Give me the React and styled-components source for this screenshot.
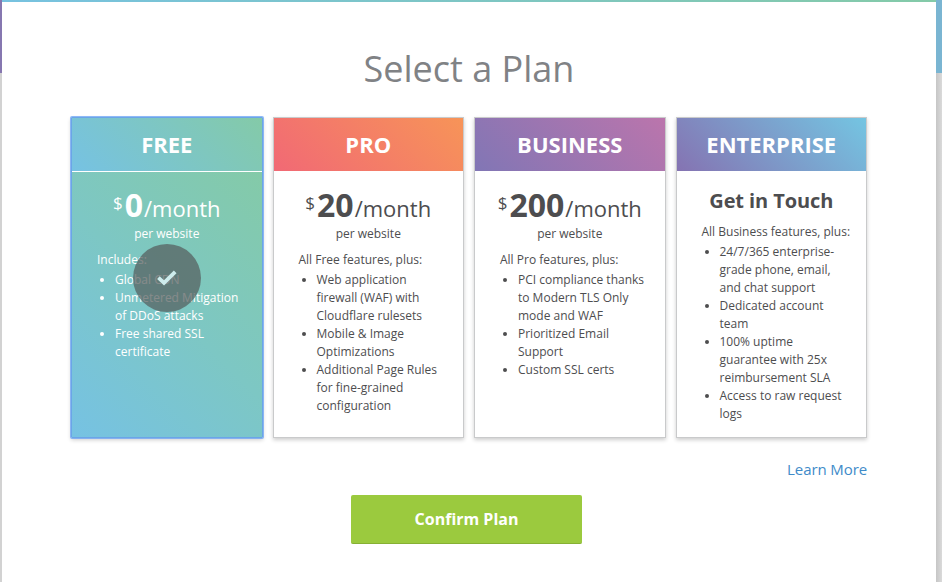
import React from "react";
import styled, { createGlobalStyle, css } from "styled-components";

const GlobalStyle = createGlobalStyle`
  * { box-sizing: border-box; }
  body {
    margin: 0;
    background: #d2d2d2;
    font-family: "Open Sans", sans-serif;
    color: #4d4d4f;
    overflow: hidden;
  }
`;

const Page = styled.div`
  height: 582px;
  padding: 0 6px 0 2px;
  background:
    linear-gradient(90deg, #8677b0 0, #8677b0 2px, #7ab5d2 936px) 0 0 / 100% 73px no-repeat,
    linear-gradient(90deg, #d2d2d2 936px, #c6c6c6 936px, #dadada 942px);
`;

const Modal = styled.main`
  height: 582px;
  padding: 45px 69px 0;
  display: flex;
  flex-direction: column;
  background:
    linear-gradient(90deg, #77c2e0, #84caa8) 0 0 / 100% 2px no-repeat,
    #fff;
`;

const Title = styled.h1`
  margin: 0;
  height: 48px;
  line-height: 48px;
  text-align: center;
  font-size: 36px;
  font-weight: 400;
  color: #808285;
`;

const Plans = styled.section`
  margin-top: 24px;
  display: grid;
  grid-template-columns: repeat(4, 191.5px);
  grid-template-rows: 321px;
  gap: 10px;
  height: 321px;
`;

const Card = styled.article`
  position: relative;
  display: flex;
  flex-direction: column;
  border: 1px solid #c9cacb;
  background: #fff;
  box-shadow: 0 2px 4px rgba(0, 0, 0, 0.2);
  ${(p) =>
    p.$selected &&
    css`
      color: #fff;
      border-color: #6ba5e7;
      border-radius: 1px;
      box-shadow: 0 0 0 1px rgba(106, 163, 245, 0.75), 0 2px 4px rgba(0, 0, 0, 0.2);
    `}
`;

const CardHeader = styled.h2`
  margin: 0;
  flex: 0 0 53px;
  line-height: 52px;
  text-align: center;
  font-size: 22px;
  font-weight: 700;
  color: #fff;
  background: linear-gradient(45deg, ${(p) => p.$from}, ${(p) => p.$to});
`;

const CardBody = styled.div`
  flex: 1;
  padding: 0 20px 0 25px;
  font-size: 12px;
  line-height: 18px;
  ${(p) =>
    p.$filled &&
    css`
      background: linear-gradient(45deg, #76c2e3, #7dc7c4 50%, #84caa8);
      box-shadow: inset 0 1px #fff;
    `}
`;

const Price = styled.div`
  height: 54px;
  margin: 0 -20px 0 -25px;
  display: flex;
  justify-content: center;
  align-items: baseline;
  line-height: 67px;
  font-size: 22px;
  white-space: nowrap;
`;

const Currency = styled.span`
  font-size: 17px;
  position: relative;
  top: -8px;
  margin-right: 2px;
`;

const Amount = styled.strong`
  font-size: 32px;
  font-weight: 700;
`;

const Month = styled.span`
  margin-left: 1px;
`;

const Period = styled.div`
  margin: 0 -20px 8px -25px;
  text-align: center;
`;

const Contact = styled.div`
  height: 52px;
  margin: 0 -20px 0 -25px;
  text-align: center;
  font-size: 20px;
  letter-spacing: -0.1px;
  line-height: 59px;
  font-weight: 700;
`;

const Intro = styled.div`
  white-space: nowrap;
`;

const Features = styled.ul`
  margin: 2px 0 0;
  padding: 0 0 0 18px;
`;

const CheckBadge = styled.div`
  position: absolute;
  left: 61px;
  top: 126px;
  width: 68px;
  height: 68px;
  border-radius: 50%;
  display: grid;
  place-items: center;
  background: rgba(84, 91, 91, 0.71);
`;

const LearnMore = styled.a`
  align-self: flex-end;
  margin-top: 20px;
  font-size: 15px;
  letter-spacing: -0.1px;
  line-height: 22px;
  color: #408bc9;
`;

const Confirm = styled.button`
  width: 231px;
  height: 49px;
  margin: 15px 0 0 280px;
  padding: 0;
  border: 0;
  border-bottom: 1px solid #86b034;
  border-radius: 2px;
  background: #9bca3e;
  color: #fff;
  font: 700 16px/48px "Open Sans", sans-serif;
`;

const plans = [
  {
    name: "FREE", from: "#76c2e3", to: "#84caa8", price: "0", intro: "Includes:", selected: true,
    features: ["Global CDN", "Unmetered Mitigation of DDoS attacks", "Free shared SSL certificate"],
  },
  {
    name: "PRO", from: "#f16975", to: "#f79458", price: "20", intro: "All Free features, plus:",
    features: ["Web application firewall (WAF) with Cloudflare rulesets", "Mobile & Image Optimizations", "Additional Page Rules for fine-grained configuration"],
  },
  {
    name: "BUSINESS", from: "#8176b5", to: "#bb75ac", price: "200", intro: "All Pro features, plus:",
    features: ["PCI compliance thanks to Modern TLS Only mode and WAF", "Prioritized Email Support", "Custom SSL certs"],
  },
  {
    name: "ENTERPRISE", from: "#8573b2", to: "#74c5e2", intro: "All Business features, plus:",
    features: ["24/7/365 enterprise-grade phone, email, and chat support", "Dedicated account team", "100% uptime guarantee with 25x reimbursement SLA", "Access to raw request logs"],
  },
];

function Plan({ plan }) {
  return (
    <Card $selected={plan.selected}>
      <CardHeader $from={plan.from} $to={plan.to}>{plan.name}</CardHeader>
      <CardBody $filled={plan.selected}>
        {plan.price ? (
          <>
            <Price>
              <Currency>$</Currency>
              <Amount>{plan.price}</Amount>
              <Month>/month</Month>
            </Price>
            <Period>per website</Period>
          </>
        ) : (
          <Contact>Get in Touch</Contact>
        )}
        <Intro>{plan.intro}</Intro>
        <Features>
          {plan.features.map((f) => <li key={f}>{f}</li>)}
        </Features>
      </CardBody>
      {plan.selected && (
        <CheckBadge>
          <svg width="20" height="16" viewBox="0 0 20 16">
            <path d="M1.4 7.6 L7 12.8 L18.2 1.8" fill="none" stroke="#cdecec" strokeWidth="3.8" />
          </svg>
        </CheckBadge>
      )}
    </Card>
  );
}

export default function App() {
  return (
    <>
      <GlobalStyle />
      <Page>
        <Modal>
          <Title>Select a Plan</Title>
          <Plans>
            {plans.map((p) => <Plan key={p.name} plan={p} />)}
          </Plans>
          <LearnMore>Learn More</LearnMore>
          <Confirm>Confirm Plan</Confirm>
        </Modal>
      </Page>
    </>
  );
}
